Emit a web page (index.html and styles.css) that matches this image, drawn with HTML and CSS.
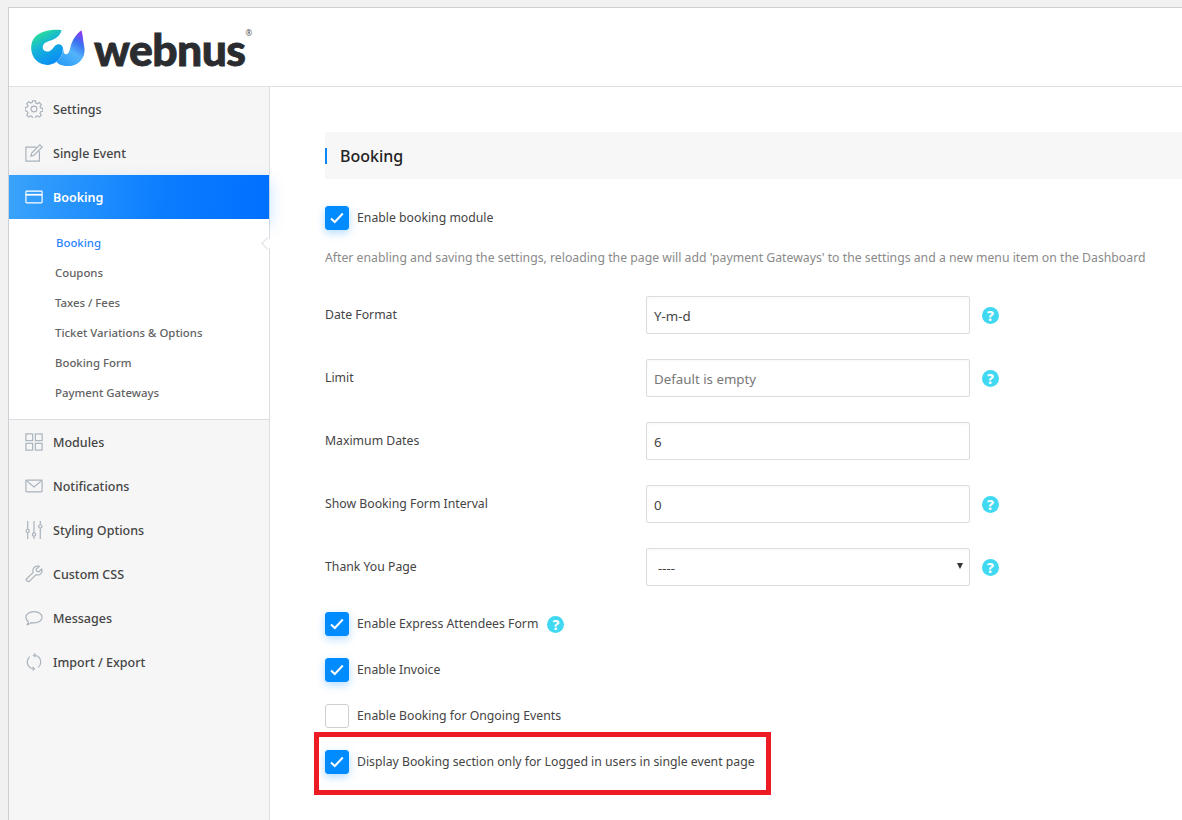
FILE: index.html
```html
<!DOCTYPE html>
<html lang="en">
<head>
    <meta charset="UTF-8">
    <meta name="viewport" content="width=device-width, initial-scale=1.0">
    <title>Booking Settings</title>
    <link rel="stylesheet" href="styles.css">
</head>
<body>
    <div class="wrap">
        <header class="top">
            <div class="logo">
                <svg class="logo-mark" width="66" height="42" viewBox="0 0 200 126">
                    <defs>
                        <linearGradient id="lg1" x1="0.1" y1="0.05" x2="0.6" y2="1">
                            <stop offset="0" stop-color="#2fe88a"/>
                            <stop offset="0.45" stop-color="#14b4d8"/>
                            <stop offset="1" stop-color="#0a8cf5"/>
                        </linearGradient>
                        <linearGradient id="lg2" x1="0.2" y1="1" x2="0.75" y2="0">
                            <stop offset="0" stop-color="#2b9cf7"/>
                            <stop offset="0.45" stop-color="#52b4fa"/>
                            <stop offset="0.75" stop-color="#3a6ff0"/>
                            <stop offset="1" stop-color="#8a3bf0"/>
                        </linearGradient>
                    </defs>
                    <path d="M108 12C80 8 45 14 28 32C10 50 12 85 32 105C48 120 75 122 92 108C104 98 112 85 112 65C108 52 95 52 87 60C80 70 72 80 60 76C48 72 48 58 58 50C70 42 100 42 108 12Z" fill="url(#lg1)"/>
                    <path d="M92 108C100 120 125 124 145 118C170 110 182 85 176 60C173 42 172 25 168 12C155 22 142 38 136 58C133 72 130 85 122 85C114 85 114 75 112 65C113 85 104 98 92 108Z" fill="url(#lg2)"/>
                </svg>
                <span class="logo-text">webnus</span>
                <span class="logo-reg">®</span>
            </div>
        </header>
        <div class="main">
            <aside class="side">
                <a class="nav-item">
                    <svg class="ico" viewBox="0 0 20 20"><circle cx="10" cy="10" r="3.200"/><path d="M8.400 1h3.200l.5 2.500 1.700.7 2.100-1.400 2.200 2.200-1.400 2.100.7 1.700 2.500.5v3.200l-2.500.5-.7 1.700 1.400 2.100-2.200 2.200-2.100-1.400-1.700.7-.5 2.500H8.400l-.5-2.500-1.700-.7-2.100 1.400-2.200-2.200 1.400-2.100-.7-1.700L.1 11.600V8.400l2.500-.5.7-1.700-1.400-2.100 2.200-2.200 2.100 1.400 1.700-.7z"/></svg>
                    <span>Settings</span>
                </a>
                <a class="nav-item">
                    <svg class="ico" viewBox="0 0 20 20"><path d="M13 3.500H1v15.500h15V8"/><path d="M6.500 13.500l1-3.500L16.500 1l2.500 2.500-9 9z"/></svg>
                    <span>Single Event</span>
                </a>
                <a class="nav-item active">
                    <svg class="ico" viewBox="0 0 20 20"><rect x="1" y="3.500" width="18" height="13" rx="1"/><path d="M1 7.500h18" stroke-width="2"/></svg>
                    <span>Booking</span>
                </a>
                <ul class="sub">
                    <li class="current">Booking</li>
                    <li>Coupons</li>
                    <li>Taxes / Fees</li>
                    <li>Ticket Variations &amp; Options</li>
                    <li>Booking Form</li>
                    <li>Payment Gateways</li>
                </ul>
                <a class="nav-item">
                    <svg class="ico" viewBox="0 0 20 20"><rect x="1" y="1" width="7.500" height="7.500"/><rect x="11.500" y="1" width="7.500" height="7.500"/><rect x="1" y="11.500" width="7.500" height="7.500"/><rect x="11.500" y="11.500" width="7.500" height="7.500"/></svg>
                    <span>Modules</span>
                </a>
                <a class="nav-item">
                    <svg class="ico" viewBox="0 0 20 20"><rect x="1" y="3.500" width="18" height="13" rx="1"/><path d="M1.500 4l8.500 7 8.500-7"/></svg>
                    <span>Notifications</span>
                </a>
                <a class="nav-item">
                    <svg class="ico" viewBox="0 0 20 20"><path d="M3 0v9M3 13v7M10 0v13M10 17v3M17 0v4M17 8v12"/><circle cx="3" cy="11" r="1.800"/><circle cx="10" cy="15" r="1.800"/><circle cx="17" cy="6" r="1.800"/></svg>
                    <span>Styling Options</span>
                </a>
                <a class="nav-item">
                    <svg class="ico" viewBox="0 0 20 20"><path d="M1.500 15.500L9 8.500C8 5 9.500 2 13 1.200c1.200-.2 2 0 2.800.3L12.500 4.500l.5 2.500 2.500.5 3-3c.6 1.500.5 3.500-.8 5-1.500 1.600-3.500 2-5.500 1.200l-7.200 7.300c-1.500 1.200-4.500-1-3.500-2.500z"/></svg>
                    <span>Custom CSS</span>
                </a>
                <a class="nav-item">
                    <svg class="ico" viewBox="0 0 20 20"><path d="M10 3c5 0 9 2.800 9 6.300s-4 6.200-9 6.200c-1 0-2-.1-3-.4C5.500 16.500 4 17.200 2.500 17.300c.8-1 1.200-2.100 1.200-3.200C2 12.900 1 11.200 1 9.300 1 5.800 5 3 10 3z"/></svg>
                    <span>Messages</span>
                </a>
                <a class="nav-item">
                    <svg class="ico" viewBox="0 0 20 20"><path d="M11 2.500c3.500.5 6.500 3.500 6.500 7.500 0 2.500-1 4.500-2.800 6M9 17.500c-3.500-.5-6.500-3.500-6.500-7.500 0-2.500 1-4.500 2.800-6"/><path d="M11.500 .5L9.500 2.500l2 2M8.500 15.500l2 2-2 2"/></svg>
                    <span>Import / Export</span>
                </a>
            </aside>
            <section class="content">
                <h2 class="title"><span>Booking</span></h2>

                <div class="check-row first">
                    <span class="cb on"><svg width="14" height="12" viewBox="0 0 14 12"><path d="M1 6.500l3.800 3.500 8-8.500"/></svg></span>
                    <label>Enable booking module</label>
                </div>
                <p class="note">After enabling and saving the settings, reloading the page will add 'payment Gateways' to the settings and a new menu item on the Dashboard</p>

                <div class="form-row">
                    <label>Date Format</label>
                    <div class="field">Y-m-d</div>
                    <span class="help">?</span>
                </div>
                <div class="form-row">
                    <label>Limit</label>
                    <div class="field empty">Default is empty</div>
                    <span class="help">?</span>
                </div>
                <div class="form-row">
                    <label>Maximum Dates</label>
                    <div class="field">6</div>
                </div>
                <div class="form-row">
                    <label>Show Booking Form Interval</label>
                    <div class="field">0</div>
                    <span class="help">?</span>
                </div>
                <div class="form-row">
                    <label>Thank You Page</label>
                    <div class="field select"><span>----</span><i class="arrow"></i></div>
                    <span class="help">?</span>
                </div>

                <div class="checks">
                    <div class="check-row">
                        <span class="cb on"><svg width="14" height="12" viewBox="0 0 14 12"><path d="M1 6.500l3.800 3.500 8-8.500"/></svg></span>
                        <label>Enable Express Attendees Form</label>
                        <span class="help inline">?</span>
                    </div>
                    <div class="check-row">
                        <span class="cb on"><svg width="14" height="12" viewBox="0 0 14 12"><path d="M1 6.500l3.800 3.500 8-8.500"/></svg></span>
                        <label>Enable Invoice</label>
                    </div>
                    <div class="check-row">
                        <span class="cb"></span>
                        <label>Enable Booking for Ongoing Events</label>
                    </div>
                    <div class="check-row marked">
                        <span class="cb on"><svg width="14" height="12" viewBox="0 0 14 12"><path d="M1 6.500l3.800 3.500 8-8.500"/></svg></span>
                        <label>Display Booking section only for Logged in users in single event page</label>
                    </div>
                </div>
            </section>
        </div>
    </div>
</body>
</html>
```

FILE: styles.css
```css
html, body {
    height: 820px;
    overflow: hidden;
}
body {
    font-family: "Noto Sans", "Open Sans", sans-serif;
    font-size: 12.5px;
    color: #444;
    background-color: #f1f1f1;
    margin: 0;
    padding: 7px 0 0 8px;
    box-sizing: border-box;
}
.wrap {
    background-color: #fff;
    border-top: 1px solid #ccd0d4;
    border-left: 1px solid #ccd0d4;
    height: 813px;
    overflow: hidden;
}
.top {
    height: 78px;
    border-bottom: 1px solid #e0e0e0;
    display: flex;
    align-items: center;
    padding-left: 17px;
}
.logo {
    display: flex;
    align-items: center;
    height: 42px;
}
.logo-text {
    font-family: "Lato", sans-serif;
    font-weight: 900;
    font-size: 44.5px;
    letter-spacing: -0.6px;
    color: #2a2c30;
    -webkit-text-stroke: 0.8px #2a2c30;
    margin-left: 2px;
    margin-top: 3px;
    line-height: 36px;
}
.logo-reg {
    font-size: 8px;
    color: #555;
    align-self: flex-start;
    margin-top: 1px;
}
.main {
    display: flex;
}
.side {
    width: 260px;
    height: 734px;
    background-color: #f6f6f6;
    border-right: 1px solid #dcdfe2;
    flex-shrink: 0;
}
.nav-item {
    display: flex;
    align-items: center;
    height: 44px;
    padding-left: 15px;
    gap: 9px;
    font-weight: 500;
    color: #444;
}
.ico {
    width: 18px;
    height: 18px;
    margin: 0 1px;
    fill: none;
    stroke: #a9b2bc;
    stroke-width: 1.300;
    flex-shrink: 0;
}
.nav-item.active {
    color: #fff;
    font-weight: 600;
    background: linear-gradient(95deg, #3aa3fb, #0a7dff 60%, #0070ff);
    box-shadow: 0 6px 16px rgba(0, 130, 255, 0.25);
    position: relative;
}
.nav-item.active .ico {
    stroke: #fff;
}
.sub {
    list-style: none;
    margin: 0;
    padding: 9px 0 11px;
    background-color: #fff;
    border-bottom: 1px solid #dcdfe2;
    position: relative;
}
.sub li {
    height: 30px;
    line-height: 30px;
    padding-left: 46px;
    font-size: 11.4px;
    font-weight: 500;
    color: #636363;
}
.sub li.current {
    color: #2a85ff;
    padding-left: 47px;
}
.sub::after {
    content: "";
    position: absolute;
    right: -3px;
    top: 20px;
    width: 8px;
    height: 8px;
    background-color: #fff;
    border-left: 1px solid #dcdfe2;
    border-bottom: 1px solid #dcdfe2;
    transform: rotate(45deg);
}
.content {
    flex: 1;
    padding: 45px 0 0 55px;
    min-width: 0;
    font-size: 12.25px;
}
.title {
    margin: 0 0 27px;
    height: 47px;
    background-color: #f7f7f7;
    display: flex;
    align-items: center;
    font-size: 16px;
    font-weight: 500;
    color: #222;
}
.title span {
    border-left: 2px solid #0a86f5;
    padding-left: 13px;
    line-height: 16px;
    height: 16px;
    display: flex;
    align-items: center;
}
.check-row {
    display: flex;
    align-items: center;
    height: 24px;
    gap: 8px;
    margin-bottom: 22px;
    position: relative;
}
.check-row.first {
    margin-bottom: 19px;
}
.cb {
    width: 24px;
    height: 24px;
    box-sizing: border-box;
    border: 1px solid #cfcfcf;
    border-radius: 3px;
    background-color: #fff;
    display: flex;
    align-items: center;
    justify-content: center;
    flex-shrink: 0;
}
.cb.on {
    background-color: #008bff;
    border-color: #008bff;
    box-shadow: 0 3px 8px rgba(0, 139, 255, 0.3);
}
.cb svg {
    fill: none;
    stroke: #fff;
    stroke-width: 2;
}
.check-row label {
    margin-top: -1px;
}
.note {
    margin: 0 0 29px;
    line-height: 18px;
    white-space: nowrap;
    color: #8a8a8a;
}
.form-row {
    display: flex;
    align-items: center;
    height: 38px;
    margin-bottom: 25px;
}
.form-row label {
    width: 321px;
    flex-shrink: 0;
    padding-bottom: 2px;
}
.field {
    width: 324px;
    height: 38px;
    box-sizing: border-box;
    border: 1px solid #ddd;
    border-radius: 2px;
    box-shadow: inset 0 1px 3px rgba(0, 0, 0, 0.04);
    padding: 1px 7px 0;
    display: flex;
    align-items: center;
    color: #444;
    font-size: 13.3px;
}
.field.empty {
    color: #777;
}
.field.select {
    padding-left: 11px;
    justify-content: space-between;
    padding-right: 6px;
}
.arrow {
    width: 0;
    height: 0;
    border-left: 3px solid transparent;
    border-right: 3px solid transparent;
    border-top: 6px solid #333;
    margin-bottom: 3px;
}
.help {
    width: 17px;
    height: 17px;
    border-radius: 50%;
    background-color: #40d9f1;
    color: #fff;
    font-weight: 800;
    font-size: 14px;
    line-height: 17px;
    text-align: center;
    margin-left: 12px;
    flex-shrink: 0;
}
.help.inline {
    margin-left: 1px;
}
.checks {
    padding-top: 1px;
}
.marked::after {
    content: "";
    position: absolute;
    left: -11px;
    top: -18px;
    width: 447px;
    height: 53px;
    border: 5px solid #ed1c24;
}
```
